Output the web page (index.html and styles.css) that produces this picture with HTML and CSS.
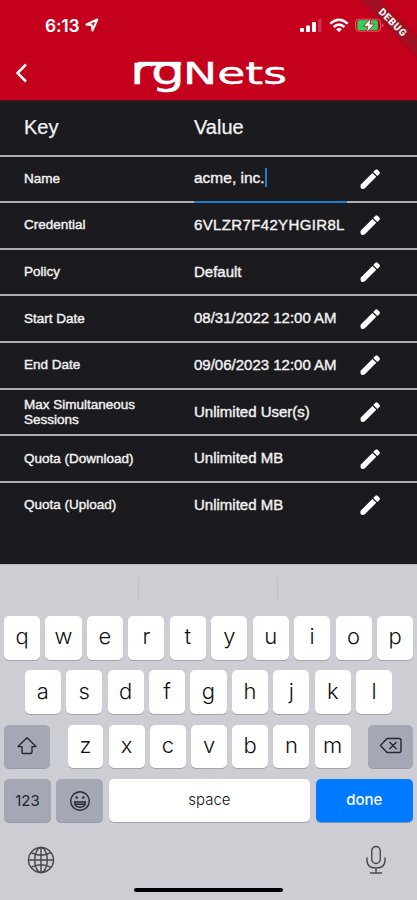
FILE: index.html
```html
<!DOCTYPE html>
<html lang="en">
<head>
<meta charset="utf-8">
<title>rgNets</title>
<link rel="stylesheet" href="styles.css">
</head>
<body>
<svg class="defs" width="0" height="0" aria-hidden="true">
  <symbol id="pencil" viewBox="0 0 24 24"><path d="M3.300 17.300 14.200 6.400l3.600 3.500L7 20.700q-1.500.7-3 .3-1.200-.8-.7-3.700zM15 5.500l2-2q1-.8 2 0l1.800 1.800q.8 1 0 2l-2.100 2z"/></symbol>
</svg>
<header class="header">
  <div class="status">
    <div class="clock">6:13
      <svg width="14" height="14" viewBox="0 0 14 14"><path d="M12.3 1.5 1.5 6.500l5.300.8.7 5.200z" fill="none" stroke="#fff" stroke-width="2" stroke-linejoin="round"/></svg>
    </div>
    <div class="indicators">
      <svg width="23" height="15" viewBox="0 0 23 15" fill="#fff"><rect x="0" y="10" width="4" height="4" rx="1"/><rect x="6" y="7.500" width="4" height="6.500" rx="1"/><rect x="12" y="4" width="4" height="10" rx="1"/><rect x="18" y="1" width="3.500" height="13" rx="1" opacity=".2"/></svg>
      <svg width="20" height="15" viewBox="0 0 20 15"><g fill="none" stroke="#fff" stroke-width="2.5"><path d="M1.2 5.6Q10-2.2 18.8 5.6"/><path d="M4.6 9Q10 4.2 15.4 9"/></g><path d="M7.1 11.2Q10 9 12.9 11.2L10 14.2z" fill="#fff"/></svg>
      <svg width="29" height="15" viewBox="0 0 29 15"><rect x=".6" y="1.2" width="25" height="12" rx="3.6" fill="none" stroke="#e05a68" stroke-width="1.1"/><rect x="2.400" y="2.200" width="20.500" height="10" rx="2" fill="#30d158"/><path d="M27 5.3v4q1.5-.5 1.5-2t-1.5-2z" fill="#e05a68"/><path d="M16.200 0 8.500 8.300h4.500L11.300 14.800l8.200-8.700h-4.700z" fill="#fff" stroke="#c4001d" stroke-width=".8"/></svg>
    </div>
  </div>
  <div class="titlebar">
    <svg class="back" width="14" height="22" viewBox="0 0 14 22"><path d="M12 2.500 3.500 11l8.500 8.500" fill="none" stroke="#fff" stroke-width="2.500"/></svg>
    <svg class="logo" width="156" height="40" viewBox="0 0 156 40"><rect x="5" y="9" width="43" height="3.500" rx="1"/><text x="-3" y="31" font-size="39" textLength="55" lengthAdjust="spacingAndGlyphs">rg</text><text x="50" y="31" font-size="30" textLength="104" lengthAdjust="spacingAndGlyphs">Nets</text></svg>
  </div>
  <div class="debug">DEBUG</div>
</header>
<main class="table">
  <div class="row head"><div>Key</div><div>Value</div></div>
  <div class="row"><div class="key">Name</div><div class="value editing">acme, inc.<i class="caret"></i></div><svg class="edit"><use href="#pencil"/></svg></div>
  <div class="row"><div class="key">Credential</div><div class="value credential">6VLZR7F42YHGIR8L</div><svg class="edit"><use href="#pencil"/></svg></div>
  <div class="row"><div class="key">Policy</div><div class="value">Default</div><svg class="edit"><use href="#pencil"/></svg></div>
  <div class="row"><div class="key">Start Date</div><div class="value">08/31/2022 12:00 AM</div><svg class="edit"><use href="#pencil"/></svg></div>
  <div class="row"><div class="key">End Date</div><div class="value">09/06/2023 12:00 AM</div><svg class="edit"><use href="#pencil"/></svg></div>
  <div class="row"><div class="key">Max Simultaneous Sessions</div><div class="value">Unlimited User(s)</div><svg class="edit"><use href="#pencil"/></svg></div>
  <div class="row"><div class="key">Quota (Download)</div><div class="value">Unlimited MB</div><svg class="edit"><use href="#pencil"/></svg></div>
  <div class="row"><div class="key">Quota (Upload)</div><div class="value">Unlimited MB</div><svg class="edit"><use href="#pencil"/></svg></div>
</main>
<section class="keyboard">
  <div class="suggestions"><span></span><span></span><span></span></div>
  <div class="keys"><b>q</b><b>w</b><b>e</b><b>r</b><b>t</b><b>y</b><b>u</b><b>i</b><b>o</b><b>p</b></div>
  <div class="keys second"><b>a</b><b>s</b><b>d</b><b>f</b><b>g</b><b>h</b><b>j</b><b>k</b><b>l</b></div>
  <div class="keys third">
    <b class="gray shift"><svg width="22" height="20" viewBox="0 0 22 20"><path d="M11 1.800 2 10.600h4V16q0 1.500 1.500 1.500h7q1.500 0 1.500-1.500v-5.400h4z"/></svg></b>
    <div class="letters"><b>z</b><b>x</b><b>c</b><b>v</b><b>b</b><b>n</b><b>m</b></div>
    <b class="gray delete"><svg width="24" height="18" viewBox="0 0 24 18"><path d="M8 1.500h12q2 0 2 2v10q0 2-2 2H8L1.500 8.500zM10.500 5l7 7M17.500 5l-7 7"/></svg></b>
  </div>
  <div class="keys fourth">
    <b class="gray num">123</b>
    <b class="gray emoji"><svg width="22" height="22" viewBox="0 0 22 22"><circle cx="11" cy="11" r="9.300"/><path d="M5.500 12h11q-.5 5.300-5.500 5.300T5.500 12zM6 14.300h10"/><g class="solid"><circle cx="7.700" cy="7.500" r="1.200"/><circle cx="14.300" cy="7.500" r="1.200"/></g></svg></b>
    <b class="space">space</b>
    <b class="done">done</b>
  </div>
  <div class="tools">
    <svg width="28" height="28" viewBox="0 0 28 28"><circle cx="14" cy="14" r="12.500"/><ellipse cx="14" cy="14" rx="6.300" ry="12.500"/><path d="M14 1.500v25M1.500 14h25M4 6.700q10 5 20 0M4 21.300q10-5 20 0"/></svg>
    <svg width="20" height="30" viewBox="0 0 20 30"><rect x="5.800" y="1.500" width="8.400" height="17" rx="4.200"/><path d="M1 12.500v3q0 7.500 9 7.500t9-7.500v-3M10 23v5M4 28h12"/></svg>
  </div>
  <div class="home"></div>
</section>
</body>
</html>
```
FILE: styles.css
```css
* { box-sizing: border-box; }
body { margin: 0; width: 417px; height: 900px; overflow: hidden; background: #1b1b1f; font-family: "Liberation Sans", Arial, sans-serif; }
.defs { display: none; }

.header { position: relative; height: 101px; background: #c4001d; overflow: hidden; border-bottom: 1px solid #65101e; color: #fff; }
.status { display: flex; justify-content: space-between; height: 50px; padding: 18px 30px 0 45px; }
.clock { display: flex; align-items: flex-start; gap: 5px; font: 600 17.500px/16px Inter, sans-serif; letter-spacing: -.2px; }
.indicators { display: flex; gap: 6px; padding-right: 3px; }
.indicators svg { flex: none; }
.titlebar { display: flex; padding: 3px 0 0 14px; }
.back { margin-top: 9px; }
.logo { margin-left: 105px; overflow: visible; font-family: "DejaVu Sans", sans-serif; fill: #fff; stroke: #fff; stroke-width: .4px; }
.debug { position: absolute; left: 343px; top: 16px; width: 100px; height: 13px; transform: rotate(45deg); background: #a01020; box-shadow: 0 0 5px #80001866; text-align: center; font: 900 10px/13px Roboto, sans-serif; letter-spacing: .7px; }

.table { height: 463px; background: #1b1b1f; color: #f2f2f2; }
.row { display: grid; grid-template-columns: 170px 153px 1fr; align-items: center; height: 46.670px; padding-left: 24px; border-bottom: 2px solid #aeaeae; }
.row.head { height: 55.500px; font-size: 20px; -webkit-text-stroke: .25px; }
.row:last-child { border-bottom: 0; height: 44px; }
.key { font-size: 13.500px; line-height: 15px; padding: 0 40px 1px 0; -webkit-text-stroke: .4px; }
.value { font-size: 15px; line-height: 20px; padding-bottom: 1px; white-space: nowrap; -webkit-text-stroke: .4px; }
.credential { letter-spacing: .36px; }
.editing { display: flex; align-items: center; align-self: stretch; font-size: 15.500px; margin-bottom: -2px; padding-bottom: 2px; border-bottom: 2px solid #1b7fc9; }
.caret { width: 2px; height: 19px; background: #1b7fd5; }
.edit { width: 26px; height: 26px; margin-left: 10px; fill: #fff; }

.keyboard { height: 336px; padding: 0 4px; background: #cdced4; border-top: 1px solid #b8b9bd; }
.suggestions { display: flex; height: 51px; padding-top: 12px; }
.suggestions span { width: 135px; height: 24px; border-right: 1px solid #c1c3ca; }
.suggestions span:nth-child(2) { width: 140px; }
.suggestions span:last-child { border: 0; }
.keys, .letters { display: flex; gap: 5.300px; }
.keys { height: 43.500px; margin-bottom: 10.800px; }
.keys b { flex: 1; display: flex; align-items: center; justify-content: center; height: 43.500px; padding-bottom: 3px; background: #fff; border-radius: 5px; box-shadow: 0 1px 0 #a2a3a9; color: #111; font: 300 22px Inter, sans-serif; }
.second { padding: 0 20.800px; }
.third { gap: 17.500px; }
.letters { flex: 1; }
.keys .gray { background: #a3a8b4; color: #25272d; box-shadow: 0 1px 0 #979aa5; padding-bottom: 0; }
.keys svg, .tools svg { fill: none; stroke: #26282e; stroke-width: 1.400; stroke-linejoin: round; }
.keys .solid { fill: #26282e; stroke: none; }
.keys .shift { flex: 0 0 46px; }
.keys .delete { flex: 0 0 45px; }
.keys .num, .keys .emoji { flex: 0 0 47px; font-size: 15px; font-weight: 400; }
.keys .space { font-size: 15px; }
.keys .done { flex: 0 0 97.500px; background: #007aff; color: #fff; font-size: 15px; font-weight: 500; box-shadow: 0 1px 0 #7793b8; }
.tools { display: flex; align-items: center; justify-content: space-between; height: 44px; margin-top: 16px; padding: 0 27px 0 23px; }
.tools svg { stroke: #45474d; }
.home { width: 149px; height: 4px; margin: 6px auto 0; background: #000; border-radius: 2px; }
```
